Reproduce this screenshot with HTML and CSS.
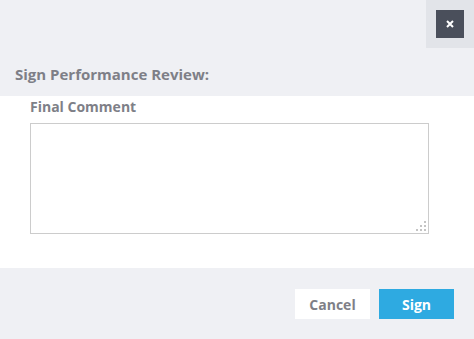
FILE: index.html
```html
<!DOCTYPE html>
<html lang="en">
<head>
    <meta charset="UTF-8">
    <meta name="viewport" content="width=device-width, initial-scale=1.0">
    <title>Sign Performance Review</title>
    <link rel="stylesheet" href="styles.css">
</head>
<body>
    <div class="modal">
        <div class="modal-header">
            <div class="close-wrap">
                <button class="close-btn" aria-label="Close">
                    <svg width="8" height="8" viewBox="0 0 8 8"><path d="M1 1L7 7M7 1L1 7" stroke="#fff" stroke-width="2"/></svg>
                </button>
            </div>
            <h2>Sign Performance Review:</h2>
        </div>
        <div class="modal-body">
            <label for="comment">Final Comment</label>
            <div class="textarea-wrap">
                <textarea id="comment"></textarea>
                <!-- resize grip -->
                <svg class="grip" width="10" height="10" viewBox="0 0 10 10">
                    <rect x="8" y="0" width="2" height="2"/>
                    <rect x="4" y="4" width="2" height="2"/>
                    <rect x="8" y="4" width="2" height="2"/>
                    <rect x="0" y="8" width="2" height="2"/>
                    <rect x="4" y="8" width="2" height="2"/>
                    <rect x="8" y="8" width="2" height="2"/>
                </svg>
            </div>
        </div>
        <div class="modal-footer">
            <button class="cancel-btn">Cancel</button>
            <button class="sign-btn">Sign</button>
        </div>
    </div>
</body>
</html>
```

FILE: styles.css
```css
body {
    margin: 0;
    font-family: "Open Sans", Arial, sans-serif;
    background-color: #eff0f4;
}
.modal {
    width: 474px;
    height: 339px;
    display: flex;
    flex-direction: column;
}
.modal-header {
    height: 96px;
    background: #eff0f4;
    position: relative;
}
.close-wrap {
    position: absolute;
    top: 0;
    right: 0;
    width: 48px;
    height: 48px;
    background: #e2e4e9;
    display: flex;
    align-items: center;
    justify-content: center;
}
.close-btn {
    width: 28px;
    height: 28px;
    border: none;
    padding: 0;
    background: #4a4f5b;
    display: flex;
    align-items: center;
    justify-content: center;
    cursor: pointer;
}
h2 {
    margin: 0;
    padding: 64px 0 0 15px;
    font-size: 15px;
    font-weight: 700;
    line-height: 20px;
    color: #7e7f87;
}
.modal-body {
    height: 172px;
    background: white;
    padding: 0 45px 0 30px;
    box-sizing: border-box;
    display: flex;
    flex-direction: column;
}
label {
    font-size: 14px;
    font-weight: 700;
    color: #7e7f87;
    line-height: 20px;
    margin-top: 1px;
}
.textarea-wrap {
    position: relative;
    margin-top: 6px;
    width: 399px;
    height: 111px;
}
textarea {
    display: block;
    width: 100%;
    height: 100%;
    box-sizing: border-box;
    border: 1px solid #cccccc;
    border-radius: 0;
    outline: none;
    resize: none;
}
.grip {
    position: absolute;
    right: 3px;
    bottom: 3px;
    fill: #c4c4c4;
}
.modal-footer {
    flex: 1;
    display: flex;
    justify-content: flex-end;
    align-items: flex-start;
    gap: 9px;
    padding: 21px 20px 0 0;
}
.cancel-btn, .sign-btn {
    width: 75px;
    height: 30px;
    border: none;
    font-family: "Open Sans", Arial, sans-serif;
    font-size: 14px;
    font-weight: 700;
    cursor: pointer;
}
.cancel-btn {
    background: white;
    color: #7e7f87;
}
.sign-btn {
    background: #2eaae1;
    color: white;
}
```
